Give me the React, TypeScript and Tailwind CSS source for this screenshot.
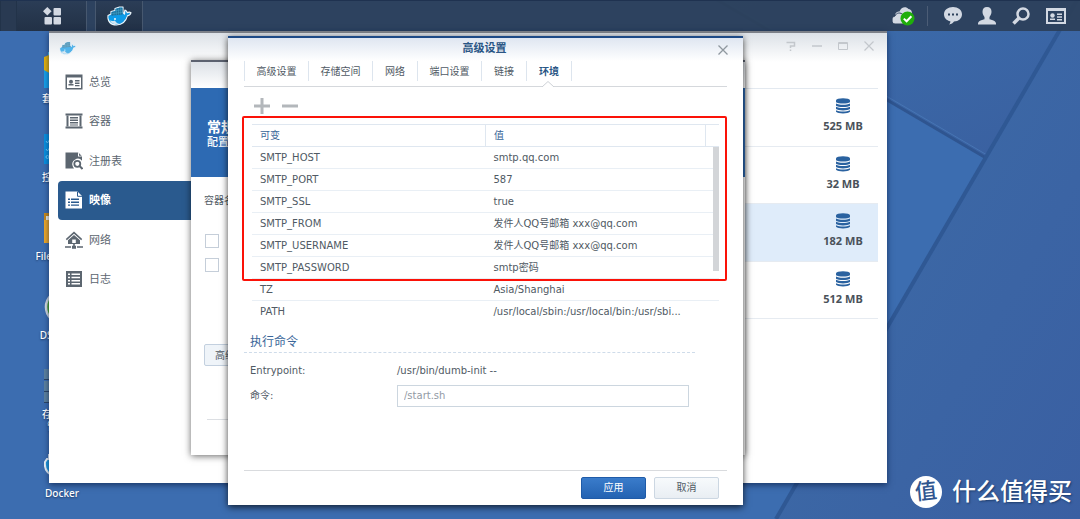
import { useState } from "react";
import type { ReactNode } from "react";

const NAV_ITEMS = [
  { name: "总览", icon: "overview" },
  { name: "容器", icon: "container" },
  { name: "注册表", icon: "registry" },
  { name: "映像", icon: "image" },
  { name: "网络", icon: "network" },
  { name: "日志", icon: "log" },
];

const IMAGES = [
  { size: "525 MB", selected: false },
  { size: "32 MB", selected: false },
  { size: "182 MB", selected: true },
  { size: "512 MB", selected: false },
];

const TABS = ["高级设置", "存储空间", "网络", "端口设置", "链接", "环境"];

const ENV = [
  ["SMTP_HOST", "smtp.qq.com"],
  ["SMTP_PORT", "587"],
  ["SMTP_SSL", "true"],
  ["SMTP_FROM", "发件人QQ号邮箱 xxx@qq.com"],
  ["SMTP_USERNAME", "发件人QQ号邮箱 xxx@qq.com"],
  ["SMTP_PASSWORD", "smtp密码"],
  ["TZ", "Asia/Shanghai"],
  ["PATH", "/usr/local/sbin:/usr/local/bin:/usr/sbi..."],
];

function Whale({ className }: { className: string }) {
  return (
    <svg viewBox="0 0 25 20" className={className} aria-hidden="true">
      <path
        d="M1 9.500L4 8V5.500L8 4.500V2.500L12.500 1h3.500v5.500l1.500 1.500c.3-1.500-.2-2.500.5-4 1.200.5 2 1.500 2.300 2.700 1.200-.6 2.600-.6 3.700 0-.5 1.700-1.800 2.900-3.700 3.200C19 15 15.500 18.800 9.500 19 3.500 19 .5 15.500 1 9.500z"
        fill="#1597e2"
        stroke="#eef6fb"
        strokeWidth="1.200"
        strokeLinejoin="round"
      />
      <path d="M4.500 6l4-.8V3l4-1.300h3V8.500l-11 1.300z" fill="#1c6f99" />
      <path d="M7 5.500v4M9.300 3v6M11.500 2.500v6.300M13.700 2v6.500M4.500 7.700l11-1.400M8.500 4.700l7-1" stroke="#49a9cf" strokeWidth=".5" />
      <path d="M1.600 10.200l15.400-1.400c1.200.6 2 .8 3 .6-.6 1.600-1.200 2.900-2 4-5 .4-11 1.600-15.400 1-.8-1.200-1.100-2.600-1-4.200z" fill="#0d9be8" />
      <path d="M2.800 14.500c2 .8 3.700.5 5.200-.1.800 1.800 2.300 3 4.300 3.400-3.800 1.200-7.700.3-9.500-3.300z" fill="#cfe4f2" />
      <circle cx="8" cy="13" r="1" fill="#eef6fb" />
    </svg>
  );
}

function NavIcon({ name }: { name: string }) {
  return (
    <svg viewBox="0 0 18 18" className="size-[18px] shrink-0" fill="currentColor" aria-hidden="true">
      {name === "overview" && (
        <>
          <path fillRule="evenodd" d="M.5 1.500h17v15H.5zM2 4.500v10.500h14V4.500z" />
          <circle cx="6" cy="8.700" r="2" />
          <path d="M3.500 12.500h5v-1.500h-5zM10 7h4.500v1.400H10zM10 9.600h4.500V11H10zM10 12h4.500v1.200H10z" />
        </>
      )}
      {name === "container" && (
        <>
          <path d="M.5 1.500h17v2H.5zM.5 14.500h17v2H.5z" />
          <path d="M1.500 3.500h2v11h-2zM14.500 3.500h2v11h-2zM5 5h8v1.500H5zM5 7.500h8V9H5zM5 10h8v1.500H5zM5 12.500h8v1H5z" />
        </>
      )}
      {name === "registry" && (
        <>
          <path d="M.5.5H13l4 4v4.200a5.500 5.500 0 0 0-9.200 5.800L9 16.500H.5z" />
          <path d="M13 .5v4h4z" fill="#fff" />
          <path d="M14 1.300l2.500 2.500H14z" />
          <circle cx="12.300" cy="11.800" r="3" fill="#fff" stroke="currentColor" strokeWidth="1.800" />
          <path d="M14.500 14l3 3" stroke="currentColor" strokeWidth="2" />
        </>
      )}
      {name === "image" && (
        <>
          <path d="M.5.5h12l4.500 4.500v12.500H.5z" />
          <path d="M12.500.8v4.500H17" fill="none" stroke="#2a5a8e" />
          <path d="M3 7.500h2V9H3zM6 7.500h8V9H6zM3 10.500h2V12H3zM6 10.500h8V12H6zM3 13.500h2v1.300H3zM6 13.500h8v1.300H6z" fill="#2a5a8e" />
        </>
      )}
      {name === "network" && (
        <>
          <path d="M9 .5L.8 8l1 1.200L9 2.800l7.200 6.400 1-1.200z" />
          <path fillRule="evenodd" d="M9 4L3 9.300V13h12V9.300zM7.200 8.500h3.600V12H7.200z" />
          <path d="M8.200 13h1.600v2H8.200zM0 15.200h6v1.500H0zM7 14.700h4v3H7zM12 15.200h6v1.500h-6z" />
        </>
      )}
      {name === "log" && (
        <path
          fillRule="evenodd"
          d="M1 1h16v16H1zM3 3.500V5h2V3.500zM6.500 3.500V5H15V3.500zM3 6.700v1.500h2V6.700zM6.500 6.700v1.500H15V6.700zM3 9.900v1.500h2V9.900zM6.500 9.900v1.500H15V9.900zM3 13.100v1.500h2v-1.500zM6.500 13.100v1.500H15v-1.500z"
        />
      )}
    </svg>
  );
}

function DatabaseIcon() {
  return (
    <svg viewBox="0 0 16 16" className="size-4" fill="#2a62a0" aria-hidden="true">
      <ellipse cx="8" cy="2.500" rx="7" ry="2.300" />
      <path d="M1 2.500h14v1.800C13 6 3 6 1 4.300z" />
      <path d="M1 5.400c3 1.700 11 1.700 14 0v2.300c-2 1.800-12 1.800-14 0z" />
      <path d="M1 8.800c3 1.700 11 1.700 14 0v2.300c-2 1.800-12 1.800-14 0z" />
      <path d="M1 12.200c3 1.700 11 1.700 14 0v1.600c-2 2.200-12 2.200-14 0z" />
    </svg>
  );
}

function Wallpaper() {
  return (
    <svg viewBox="0 0 1080 519" preserveAspectRatio="xMidYMid slice" className="absolute inset-0 size-full" aria-hidden="true">
      <defs>
        <linearGradient id="right" x1="0" y1="0" x2="1" y2="1">
          <stop offset="0" stopColor="#3d6ea8" />
          <stop offset="1" stopColor="#3a5fa2" />
        </linearGradient>
        <linearGradient id="top" x1="0" y1="0" x2="1" y2="1">
          <stop offset="0" stopColor="#3b6fae" />
          <stop offset="1" stopColor="#3a5f9f" />
        </linearGradient>
      </defs>
      <rect width="1080" height="519" fill="#3c6db0" />
      <path d="M700-10L986 158 1083-10z" fill="url(#top)" />
      <path d="M1083-10L986 158 776 519h304z" fill="url(#right)" />
      <path d="M700-10L986 158" stroke="#2f5590" strokeWidth="3" />
      <path d="M702-12L987 155 1080-5" stroke="#4775b3" strokeWidth="1" fill="none" />
      <path d="M1083-10L776 519" stroke="#2f5894" strokeWidth="4" />
    </svg>
  );
}

function DesktopIcon({ label, children }: { label: ReactNode; children: ReactNode }) {
  return (
    <li className="flex h-[79px] flex-col items-center gap-1 text-center">
      <svg viewBox="0 0 36 36" className="size-9 shrink-0" aria-hidden="true">
        {children}
      </svg>
      <span className="text-[10px] leading-3 font-medium text-white">{label}</span>
    </li>
  );
}

function DesktopIcons() {
  return (
    <ul className="absolute top-[52px] left-5 w-[84px] font-['Noto_Sans','Noto_Sans_CJK_SC',sans-serif] [text-shadow:0_1px_2px_#1e3a66]">
      <DesktopIcon label="套件中心">
        <path d="M4 0h28v35H4z" fill="#4cc3e8" />
        <path d="M0 5l5-2h31v16L18 28 0 21z" fill="#e3b10c" />
        <path d="M0 18l18 10 18-10v18H0z" fill="#18a1ea" />
      </DesktopIcon>
      <DesktopIcon label="控制面板">
        <path d="M0 3h36v30H0z" fill="#0a91e0" />
        <path d="M2 10l1.500 2L6 8M2 18l1.500 2L6 16" stroke="#6fd0ff" fill="none" />
        <circle cx="3.500" cy="26" r="1.500" stroke="#6fd0ff" fill="none" />
      </DesktopIcon>
      <DesktopIcon label="File Station">
        <path d="M0 3h12l3 4h21v26H0z" fill="#c98a1b" />
        <path d="M2 6h30v6H2z" fill="#f4f0e2" />
        <path d="M0 10h36v23H0z" fill="#efa92a" />
      </DesktopIcon>
      <DesktopIcon label="DSM 说明">
        <circle cx="18" cy="18" r="16" fill="#4ca32b" stroke="#d9dfe2" strokeWidth="2.500" />
      </DesktopIcon>
      <DesktopIcon label={<>存储空间<br />管理员</>}>
        <path d="M0 1h36v10H0zM0 13h36v10H0zM0 24h36v10H0z" fill="#5d829f" />
        <path d="M0 11.500h36M0 23.500h36M0 34.500h36" stroke="#2c4564" />
      </DesktopIcon>
      <DesktopIcon label="Docker">
        <path
          d="M1 15l2-3h2V8h6V5h6v6h4v3c2 0 3 0 4-1 2 0 5 0 6 2-1 2-3 3-5 3-3 7-8 10-15 10C6 28 0 25 1 15z"
          fill="#1f9be0"
          stroke="#eef6fb"
          strokeWidth="2"
        />
      </DesktopIcon>
    </ul>
  );
}

function Taskbar() {
  return (
    <header className="relative flex h-[31px] shrink-0 items-center justify-between border-t border-[#1f3250] bg-[#2c405b]/95 text-[#d3d9e3]">
      <div className="flex h-full">
        <div className="w-[17px] border-x border-[#223349] bg-[#293a52]" />
        <button aria-label="主菜单" className="flex w-[70px] items-center justify-center border-r border-[#47586f] bg-linear-to-b from-[#2b3d56] to-[#223146]">
          <svg viewBox="0 0 18 18" className="size-[18px]" fill="currentColor">
            <path d="M4.300 0l4.300 4.300-4.300 4.300L0 4.300z" />
            <rect x="10.500" y="1" width="7.500" height="7.500" rx="1" />
            <rect x="1.500" y="10" width="7.500" height="7.500" rx="1" />
            <rect x="10.500" y="10" width="7.500" height="7.500" rx="1" />
          </svg>
        </button>
        <button aria-label="Docker" className="ml-2 flex w-12 items-center justify-center border-x border-[#47586f] bg-linear-to-b from-[#2b3d56] to-[#223146]">
          <Whale className="h-5 w-[25px]" />
        </button>
      </div>
      <div className="flex items-center pr-3.5">
        <button aria-label="备份状态">
          <svg viewBox="0 0 24 20" className="h-5 w-6" fill="currentColor">
            <path d="M4 8.500C5 6 7 5 8.500 5.500 10 1 15 0 17.500 3c3 .3 4 3 3 6v6H8z" />
            <path d="M1 14c0-2.500 1-3.500 3-4 1-3.500 6-4 8-1 3 0 4 2 4 4v5H4c-2 0-3-1.500-3-4z" stroke="#2c405b" />
            <circle cx="16.500" cy="12.500" r="7" fill="#1fae0b" />
            <path d="M12.800 12.600l2.800 2.700 4.800-5" fill="none" stroke="#fff" strokeWidth="2" />
          </svg>
        </button>
        <span className="mx-3 h-5 w-px bg-[#4c5d76]" />
        <div className="flex items-center gap-4 pl-1">
          <button aria-label="聊天">
            <svg viewBox="0 0 18 18" className="size-[18px]" fill="currentColor">
              <path d="M9 0c5 0 9 3 9 7.200 0 4.300-3.500 7-8 7.300-1 1.500-2.500 2.500-5 3 1-1 1.500-2 1.300-3.200C2.500 13.300 0 11 0 7.200 0 3 4 0 9 0z" />
              <path d="M4 6.500h2v2H4zM8 6.500h2v2H8zM12 6.500h2v2h-2z" fill="#2c405b" />
            </svg>
          </button>
          <button aria-label="用户">
            <svg viewBox="0 0 18 18" className="size-[18px]" fill="currentColor">
              <path d="M9 0c3 0 4.500 2 4.500 4.800 0 2-.8 3.800-2 5.200v2.200c3 1 6.500 1.600 6.500 4.300v1H0v-1c0-2.700 3.500-3.300 6.500-4.300V10c-1.200-1.400-2-3.200-2-5.200C4.500 2 6 0 9 0z" />
            </svg>
          </button>
          <button aria-label="搜索">
            <svg viewBox="0 0 18 18" className="size-[18px]" fill="none" stroke="currentColor">
              <circle cx="11" cy="7" r="5.500" strokeWidth="2.500" />
              <path d="M1.500 16.500L7 11" strokeWidth="3.500" />
            </svg>
          </button>
          <button aria-label="小工具">
            <svg viewBox="0 0 20 18" className="h-[18px] w-5" fill="currentColor">
              <path fillRule="evenodd" d="M0 1h20v16H0zM2 4v11h16V4z" />
              <circle cx="6.500" cy="8.500" r="2.200" />
              <path d="M4 13h5v-1.500H4zM11 6.500h5V8h-5zM11 9.200h5v1.500h-5zM11 12h5v1.500h-5z" />
            </svg>
          </button>
        </div>
      </div>
    </header>
  );
}

function DockerWindow() {
  return (
    <section className="absolute top-[31px] left-[49px] flex w-[838px] flex-col border-t-2 border-[#7c8088] bg-white pb-[164px] shadow-[0_2px_6px_rgba(10,30,70,0.7)]">
      <div className="flex h-[29px] items-center justify-between bg-linear-to-b from-[#dce1e7] to-white pr-3 pl-2.5">
        <Whale className="h-3.5 w-[18px] opacity-70" />
        <div className="flex gap-3.5 pb-1 text-[#c3c7cc]">
          <button aria-label="帮助">
            <svg viewBox="0 0 12 12" className="size-3" fill="none" stroke="currentColor" strokeWidth="1.500">
              <path d="M1.500 2.500h8v3.500H5.500v2M5.500 9.500v1.500" />
            </svg>
          </button>
          <button aria-label="最小化">
            <svg viewBox="0 0 12 12" className="size-3" stroke="currentColor" strokeWidth="1.500">
              <path d="M1 6h10" />
            </svg>
          </button>
          <button aria-label="最大化">
            <svg viewBox="0 0 12 12" className="size-3" fill="none" stroke="currentColor">
              <path d="M1.500 2.500h9v7h-9zM1.500 3.500h9" />
            </svg>
          </button>
          <button aria-label="关闭">
            <svg viewBox="0 0 12 12" className="size-3" stroke="currentColor" strokeWidth="1.200">
              <path d="M1.500 1.500l9 9M10.500 1.500l-9 9" />
            </svg>
          </button>
        </div>
      </div>
      <div className="flex">
        <nav className="grid h-[237px] w-[142px] shrink-0 grid-rows-6 pl-[9px]">
          {NAV_ITEMS.map((item) => (
            <a
              key={item.name}
              href="#"
              className={
                item.icon === "image"
                  ? "flex items-center gap-1.5 rounded-l-sm bg-[#2a5a8e] pl-[7px] text-[11px] font-bold text-white"
                  : "flex items-center gap-1.5 pl-[7px] text-[11px] text-[#5c6670]"
              }
            >
              <NavIcon name={item.icon} />
              <span className="pt-0.5">{item.name}</span>
            </a>
          ))}
        </nav>
        <ul className="mt-[26px] mr-[9px] grid h-[231px] flex-1 grid-rows-4 border-t border-[#e3e9f0]">
          {IMAGES.map((image) => (
            <li
              key={image.size}
              className={
                image.selected
                  ? "flex justify-end border-b border-[#e6ebf1] bg-[#dfecfa]"
                  : "flex justify-end border-b border-[#e6ebf1]"
              }
            >
              <div className="flex w-[70px] flex-col items-center justify-center gap-1 pb-0.5 font-['Noto_Sans',sans-serif] text-[11px] leading-4 font-bold text-[#4a525a]">
                <DatabaseIcon />
                {image.size}
              </div>
            </li>
          ))}
        </ul>
      </div>
    </section>
  );
}

function WizardWindow() {
  return (
    <section className="absolute top-[60px] left-[191px] w-[554px] border-t-2 border-[#5c6270] bg-white text-[10px] text-[#505a64] shadow-[0_1px_7px_rgba(0,0,0,0.6)]">
      <div className="h-[26px] bg-linear-to-b from-[#dce1e7] to-white" />
      <div className="flex h-[89px] flex-col justify-center bg-[#2d6ab3] pl-4 text-white">
        <h2 className="text-sm leading-5 font-bold">常规设置</h2>
        <p className="text-[11px] leading-3 font-medium">配置容器</p>
      </div>
      <div className="flex flex-col items-start px-[13px] pt-4">
        <label htmlFor="container-name">容器名称:</label>
        <div className="mt-[26px] flex flex-col gap-2.5 pl-px">
          <input type="checkbox" aria-label="启用资源限制" className="size-3.5 appearance-none border border-[#c5ced9] bg-white" />
          <input type="checkbox" aria-label="使用高权限执行容器" className="size-3.5 appearance-none border border-[#c5ced9] bg-white" />
        </div>
        <button className="mt-[72px] h-[22px] rounded-xs border border-[#c3d0df] bg-[#eff4f9] px-2.5">高级设置</button>
      </div>
      <div className="mx-4 mt-[53px] mb-[35px] border-t border-[#dcdfe3]" />
    </section>
  );
}

function SettingsDialog() {
  const [tab, setTab] = useState("环境");
  const [command, setCommand] = useState("/start.sh");

  return (
    <section role="dialog" aria-label="高级设置" className="absolute top-9 left-[228px] w-[515px] border-t-2 border-[#1e4a86] bg-white px-4 text-[10px] text-[#505a64] shadow-[0_2px_7px_rgba(0,0,0,0.75)]">
      <div className="-mx-4 flex h-[23px] items-center bg-linear-to-b from-[#dfe6f1] to-white pr-3.5">
        <h1 className="flex-1 pl-6 text-center text-[11px] font-bold text-[#2a5685]">高级设置</h1>
        <button aria-label="关闭">
          <svg viewBox="0 0 12 12" className="size-3" stroke="#8f979f" strokeWidth="1.300">
            <path d="M1.500 1.500l9 9M10.500 1.500l-9 9" />
          </svg>
        </button>
      </div>
      <div role="tablist" className="flex h-[26px] items-start border-b border-[#d5d8dc]">
        {TABS.map((name) => (
          <div key={name} className="relative h-full">
            <button
              role="tab"
              aria-selected={tab === name}
              onClick={() => setTab(name)}
              className={
                (name.length > 2 ? "w-16" : "w-[45px]") +
                " h-5 border-l border-[#dde5ee] " +
                (tab === name ? "font-bold text-[#2a5685]" : "")
              }
            >
              {name}
            </button>
            {tab === name && (
              <svg viewBox="0 0 12 6" className="absolute -bottom-px left-4 h-1.5 w-3" aria-hidden="true">
                <path d="M0 6L6 .5 12 6" fill="#fff" stroke="#cdd1d6" />
              </svg>
            )}
          </div>
        ))}
        <span className="h-5 w-px bg-[#dde5ee]" />
      </div>
      <div className="flex gap-3 px-2.5 pt-[11px] pb-2.5">
        <button aria-label="新增">
          <svg viewBox="0 0 16 16" className="size-4" stroke="#b3b7bb" strokeWidth="3">
            <path d="M8 0v16M0 8h16" />
          </svg>
        </button>
        <button aria-label="删除">
          <svg viewBox="0 0 16 16" className="size-4" stroke="#b3b7bb" strokeWidth="3">
            <path d="M0 8h16" />
          </svg>
        </button>
      </div>
      <div className="relative mr-2 ml-2">
        <table className="w-full table-fixed border-collapse text-left">
          <thead>
            <tr className="h-[22px] border-y border-[#dfe7f0] text-[#3a6699]">
              <th className="w-1/2 border-r border-[#dfe7f0] py-0 pl-2 font-normal">可变</th>
              <th className="py-0 pl-2 font-normal">值</th>
              <td className="w-3.5 border-l border-[#dfe7f0] p-0" />
            </tr>
          </thead>
          <tbody>
            {ENV.map(([key, value], i) => (
              <tr key={key} className={i < ENV.length - 1 ? "h-[22px] border-b border-[#e9eff5]" : "h-[22px]"}>
                <td className="py-0 pl-2">{key}</td>
                <td colSpan={2} className="py-0 pl-2 whitespace-nowrap">{value}</td>
              </tr>
            ))}
          </tbody>
        </table>
        {/* scroll thumb */}
        <div className="absolute top-[23px] right-0 h-[124px] w-1.5 bg-[#d3d5d8]" />
        <div className="absolute -top-2 -right-2 -left-2.5 h-[165px] rounded-xs border-2 border-[#fb1208]" />
      </div>
      <h2 className="mt-[9px] mr-8 border-b border-dashed border-[#cfdcea] pl-1.5 text-xs leading-5 text-[#3a6699]">执行命令</h2>
      <div className="grid grid-cols-[147px_292px] items-center gap-y-1 pt-2 pl-1.5">
        <span className="leading-5">Entrypoint:</span>
        <span className="leading-5">/usr/bin/dumb-init --</span>
        <label htmlFor="command">命令:</label>
        <input
          id="command"
          value={command}
          onChange={(e) => setCommand(e.target.value)}
          className="h-[22px] border border-[#ccd6df] bg-white px-1.5 text-[#929aa5] outline-none"
        />
      </div>
      <div className="mt-[63px] flex justify-end gap-2 border-t border-[#d9dbde] pt-1.5 pr-2 pb-1.5">
        <button className="h-[22px] w-[65px] rounded-xs border border-[#1f5ba8] bg-linear-to-b from-[#3a7ccb] to-[#2463b2] text-white">应用</button>
        <button className="h-[22px] w-[65px] rounded-xs border border-[#ccd7e2] bg-linear-to-b from-[#f7fafc] to-[#e9eef3]">取消</button>
      </div>
    </section>
  );
}

function Watermark() {
  return (
    <div className="absolute right-2 bottom-[11px] flex items-center gap-2.5 text-2xl leading-8 font-medium text-white [text-shadow:1px_1px_2px_#1d3c6b]">
      <span className="flex size-8 items-center justify-center rounded-full bg-white text-[22px] font-medium text-[#2f568f] [text-shadow:none]">
        <span className="-rotate-6">值</span>
      </span>
      什么值得买
    </div>
  );
}

export default function App() {
  return (
    <main className="relative h-screen overflow-hidden bg-[#3c6db0] font-['DejaVu_Sans','Noto_Sans_CJK_SC',sans-serif]">
      <Wallpaper />
      <Taskbar />
      <DesktopIcons />
      <DockerWindow />
      <WizardWindow />
      <SettingsDialog />
      <Watermark />
    </main>
  );
}
